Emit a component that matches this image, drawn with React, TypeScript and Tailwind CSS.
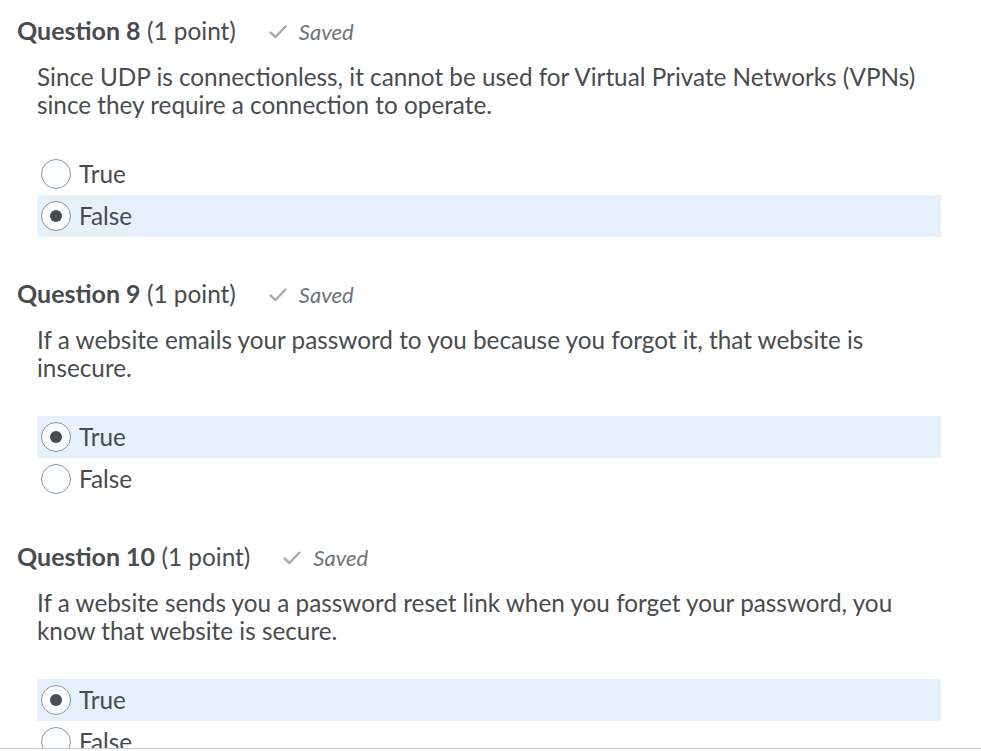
import React from "react";

type Q = {
  num: number;
  text: string;
  selected: "True" | "False";
};

const questions: Q[] = [
  {
    num: 8,
    text: "Since UDP is connectionless, it cannot be used for Virtual Private Networks (VPNs) since they require a connection to operate.",
    selected: "False",
  },
  {
    num: 9,
    text: "If a website emails your password to you because you forgot it, that website is insecure.",
    selected: "True",
  },
  {
    num: 10,
    text: "If a website sends you a password reset link when you forget your password, you know that website is secure.",
    selected: "True",
  },
];

function Radio({ checked }: { checked: boolean }) {
  return (
    <span className="flex h-[30px] w-[30px] shrink-0 items-center justify-center rounded-full border border-[#8f9397] bg-[#fafcff]">
      {checked && <span className="h-[12px] w-[12px] rounded-full bg-[#494c4e]" />}
    </span>
  );
}

function Option({ label, checked }: { label: string; checked: boolean }) {
  return (
    <div
      className={
        "flex h-[42px] items-center gap-[8px] pl-[4px] " +
        (checked ? "bg-[#e7f1fc]" : "")
      }
    >
      <Radio checked={checked} />
      <span className="text-[24.3px] leading-none text-[#494c4e]">{label}</span>
    </div>
  );
}

function Question({ q }: { q: Q }) {
  return (
    <section className="mb-[37px]">
      <div className="flex h-[40px] items-center pl-[17px]">
        <h2 className="text-[24.4px] text-[#494c4e]">
          <span className="text-[25px] font-bold">Question {q.num}</span>{" "}
          <span className="font-normal">(1 point)</span>
        </h2>
        <span className="ml-[33px] flex items-center gap-[12px] text-[#6e7377]">
          <svg width="18" height="14" viewBox="0 0 18 14" fill="none" className="mt-[2px]">
            <path d="M1.5 7.5 L6.5 12 L16.5 1.5" stroke="#a8acaf" strokeWidth="2.4" strokeLinecap="round" strokeLinejoin="round" />
          </svg>
          <span className="text-[22px] italic">Saved</span>
        </span>
      </div>
      <div className="ml-[37px] mr-[40px]">
        <p className="mt-[12px] text-[24.3px] leading-[28px] text-[#494c4e]">{q.text}</p>
        <div className="mt-[34px] flex flex-col">
          <Option label="True" checked={q.selected === "True"} />
          <Option label="False" checked={q.selected === "False"} />
        </div>
      </div>
    </section>
  );
}

export default function App() {
  return (
    <div
      className="relative h-[751px] w-[981px] overflow-hidden bg-white pt-[11px]"
      style={{ fontFamily: "Lato, 'Noto Sans', sans-serif" }}
    >
      {questions.map((q) => (
        <Question key={q.num} q={q} />
      ))}
      <div className="absolute bottom-[2px] left-0 right-0 h-px bg-[#c9ccd0]" />
      <div className="absolute bottom-0 left-0 right-0 h-[2px] bg-white" />
    </div>
  );
}
